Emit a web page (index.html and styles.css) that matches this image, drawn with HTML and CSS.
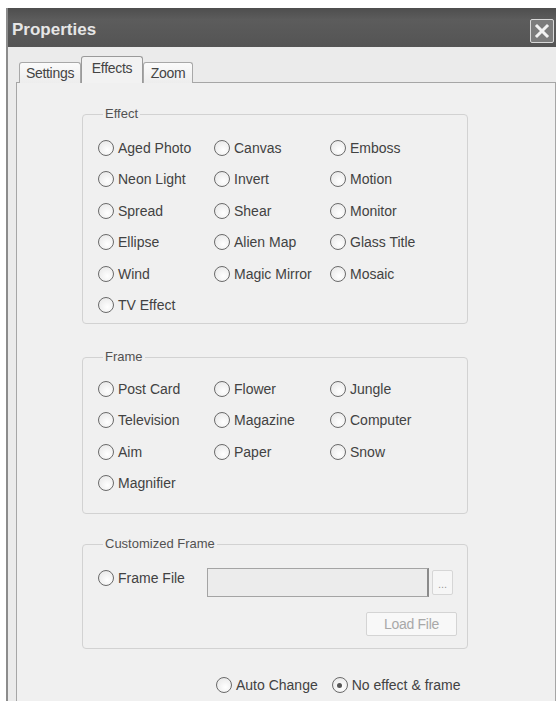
FILE: index.html
```html
<!DOCTYPE html>
<html>
<head>
<meta charset="utf-8">
<link rel="stylesheet" href="styles.css">
</head>
<body>
<div class="window">
  <div class="titlebar">
    <span class="title">Properties</span>
    <span class="close"><svg width="16" height="16" viewBox="0 0 16 16"><path d="M3 3 L13 13 M13 3 L3 13" stroke="#f2f2f2" stroke-width="3" stroke-linecap="square"/></svg></span>
  </div>
  <div class="body">
    <div class="tabs">
      <div class="tab t-settings">Settings</div>
      <div class="tab active t-effects">Effects</div>
      <div class="tab t-zoom">Zoom</div>
    </div>
    <div class="panel">
      <fieldset class="group g-effect">
        <legend>Effect</legend>
        <div class="grid">
          <label class="radio"><span class="dot"></span>Aged Photo</label>
          <label class="radio"><span class="dot"></span>Canvas</label>
          <label class="radio"><span class="dot"></span>Emboss</label>
          <label class="radio"><span class="dot"></span>Neon Light</label>
          <label class="radio"><span class="dot"></span>Invert</label>
          <label class="radio"><span class="dot"></span>Motion</label>
          <label class="radio"><span class="dot"></span>Spread</label>
          <label class="radio"><span class="dot"></span>Shear</label>
          <label class="radio"><span class="dot"></span>Monitor</label>
          <label class="radio"><span class="dot"></span>Ellipse</label>
          <label class="radio"><span class="dot"></span>Alien Map</label>
          <label class="radio"><span class="dot"></span>Glass Title</label>
          <label class="radio"><span class="dot"></span>Wind</label>
          <label class="radio"><span class="dot"></span>Magic Mirror</label>
          <label class="radio"><span class="dot"></span>Mosaic</label>
          <label class="radio"><span class="dot"></span>TV Effect</label>
        </div>
      </fieldset>
      <fieldset class="group g-frame">
        <legend>Frame</legend>
        <div class="grid">
          <label class="radio"><span class="dot"></span>Post Card</label>
          <label class="radio"><span class="dot"></span>Flower</label>
          <label class="radio"><span class="dot"></span>Jungle</label>
          <label class="radio"><span class="dot"></span>Television</label>
          <label class="radio"><span class="dot"></span>Magazine</label>
          <label class="radio"><span class="dot"></span>Computer</label>
          <label class="radio"><span class="dot"></span>Aim</label>
          <label class="radio"><span class="dot"></span>Paper</label>
          <label class="radio"><span class="dot"></span>Snow</label>
          <label class="radio"><span class="dot"></span>Magnifier</label>
        </div>
      </fieldset>
      <fieldset class="group g-custom">
        <legend>Customized Frame</legend>
        <div class="file-row">
          <label class="radio file-radio"><span class="dot"></span>Frame File</label>
          <div class="field"></div>
          <div class="browse">...</div>
        </div>
        <div class="load-row">
          <div class="load">Load File</div>
        </div>
      </fieldset>
      <div class="bottom-row">
        <label class="radio"><span class="dot"></span>Auto Change</label>
        <label class="radio"><span class="dot checked"></span>No effect &amp; frame</label>
      </div>
    </div>
  </div>
</div>
</body>
</html>
```

FILE: styles.css
```css
html, body {
  margin: 0;
  padding: 0;
  background: #ffffff;
  height: 701px;
  overflow: hidden;
}
body {
  font-family: "Liberation Sans", Arial, sans-serif;
  font-size: 14px;
  color: #424242;
}
.window {
  margin: 8px 0 0 6px;
  height: 693px;
  border-left: 2px solid #8c8c8c;
  background: #ebebeb;
  display: flex;
  flex-direction: column;
}
.titlebar {
  height: 39px;
  flex: 0 0 39px;
  background: linear-gradient(#4e4e4e, #5c5c5c 30%, #545454);
  display: flex;
  align-items: center;
  justify-content: space-between;
  padding: 0 2px 0 4px;
}
.title {
  color: #e6e6e6;
  font-weight: bold;
  font-size: 17px;
  margin-top: 4px;
}
.close {
  width: 22px;
  height: 22px;
  margin-top: 6px;
  border: 1px solid #d8d8d8;
  border-radius: 2px;
  background: #7c7c7c;
  display: flex;
  align-items: center;
  justify-content: center;
}
.body {
  flex: 1;
  display: flex;
  flex-direction: column;
  padding: 9px 0 0 8px;
}
.tabs {
  display: flex;
  align-items: flex-end;
  padding-left: 3px;
  height: 27px;
  position: relative;
  z-index: 1;
  margin-bottom: -1px;
}
.tab {
  height: 21px;
  box-sizing: border-box;
  border: 1px solid #a8a8a8;
  border-bottom: none;
  border-radius: 3px 3px 0 0;
  background: linear-gradient(#fbfbfb, #ededed);
  display: flex;
  align-items: center;
  justify-content: center;
  font-size: 14px;
  color: #444;
  letter-spacing: -0.3px;
}
.t-settings { width: 62px; }
.t-effects { width: 62px; }
.t-zoom { width: 50px; }
.tab.active {
  height: 27px;
  background: #f2f2f2;
  border-color: #9a9a9a;
  padding-bottom: 5px;
}
.panel {
  flex: 1;
  background: #f0f0f0;
  border: 1px solid #a6a6a6;
  border-bottom: none;
  padding: 23px 0 0 65px;
}
.group {
  width: 386px;
  box-sizing: border-box;
  margin: 0;
  border: 1px solid #d2d2d2;
  border-radius: 4px;
  padding: 10px 10px 2px 15px;
}
.group legend {
  font-size: 13px;
  line-height: 16px;
  padding: 0 2px;
  margin-left: 5px;
  color: #525252;
}
.g-frame {
  margin-top: 25px;
  padding-top: 8px;
  padding-bottom: 14px;
}
.g-custom {
  margin-top: 22px;
  padding: 16px 10px 12px 15px;
}
.grid {
  display: grid;
  grid-template-columns: 116px 116px 116px;
  grid-auto-rows: 31.5px;
}
.radio {
  display: flex;
  align-items: center;
  gap: 4px;
  white-space: nowrap;
  font-size: 14px;
}
.dot {
  width: 16px;
  height: 16px;
  box-sizing: border-box;
  border: 1.5px solid #6a6a6a;
  border-radius: 50%;
  background: radial-gradient(circle at 60% 65%, #ffffff, #e4e4e4);
  flex: 0 0 16px;
  display: flex;
  align-items: center;
  justify-content: center;
}
.dot.checked::after {
  content: "";
  width: 5px;
  height: 5px;
  border-radius: 50%;
  background: #555;
}
.file-row {
  display: flex;
  align-items: center;
  height: 29px;
}
.file-radio {
  width: 109px;
  margin-bottom: 9px;
}
.field {
  width: 222px;
  height: 29px;
  box-sizing: border-box;
  border: 1px solid #a4a4a4;
  border-right: 2px solid #8a8a8a;
  background: #ececec;
}
.browse {
  width: 21px;
  height: 25px;
  margin-left: 3px;
  box-sizing: border-box;
  border: 1px solid #d6d6d6;
  border-radius: 2px;
  background: #f6f6f6;
  color: #9a9a9a;
  font-size: 11px;
  display: flex;
  align-items: flex-end;
  justify-content: center;
  padding-bottom: 4px;
}
.load-row {
  display: flex;
  justify-content: flex-end;
  margin-top: 15px;
}
.load {
  width: 91px;
  height: 24px;
  box-sizing: border-box;
  border: 1px solid #d4d4d4;
  border-radius: 2px;
  background: #f8f8f8;
  color: #a8a8a8;
  display: flex;
  align-items: center;
  justify-content: center;
  letter-spacing: -0.3px;
}
.bottom-row {
  display: flex;
  gap: 14px;
  padding-left: 134px;
  margin-top: 28px;
}
```
